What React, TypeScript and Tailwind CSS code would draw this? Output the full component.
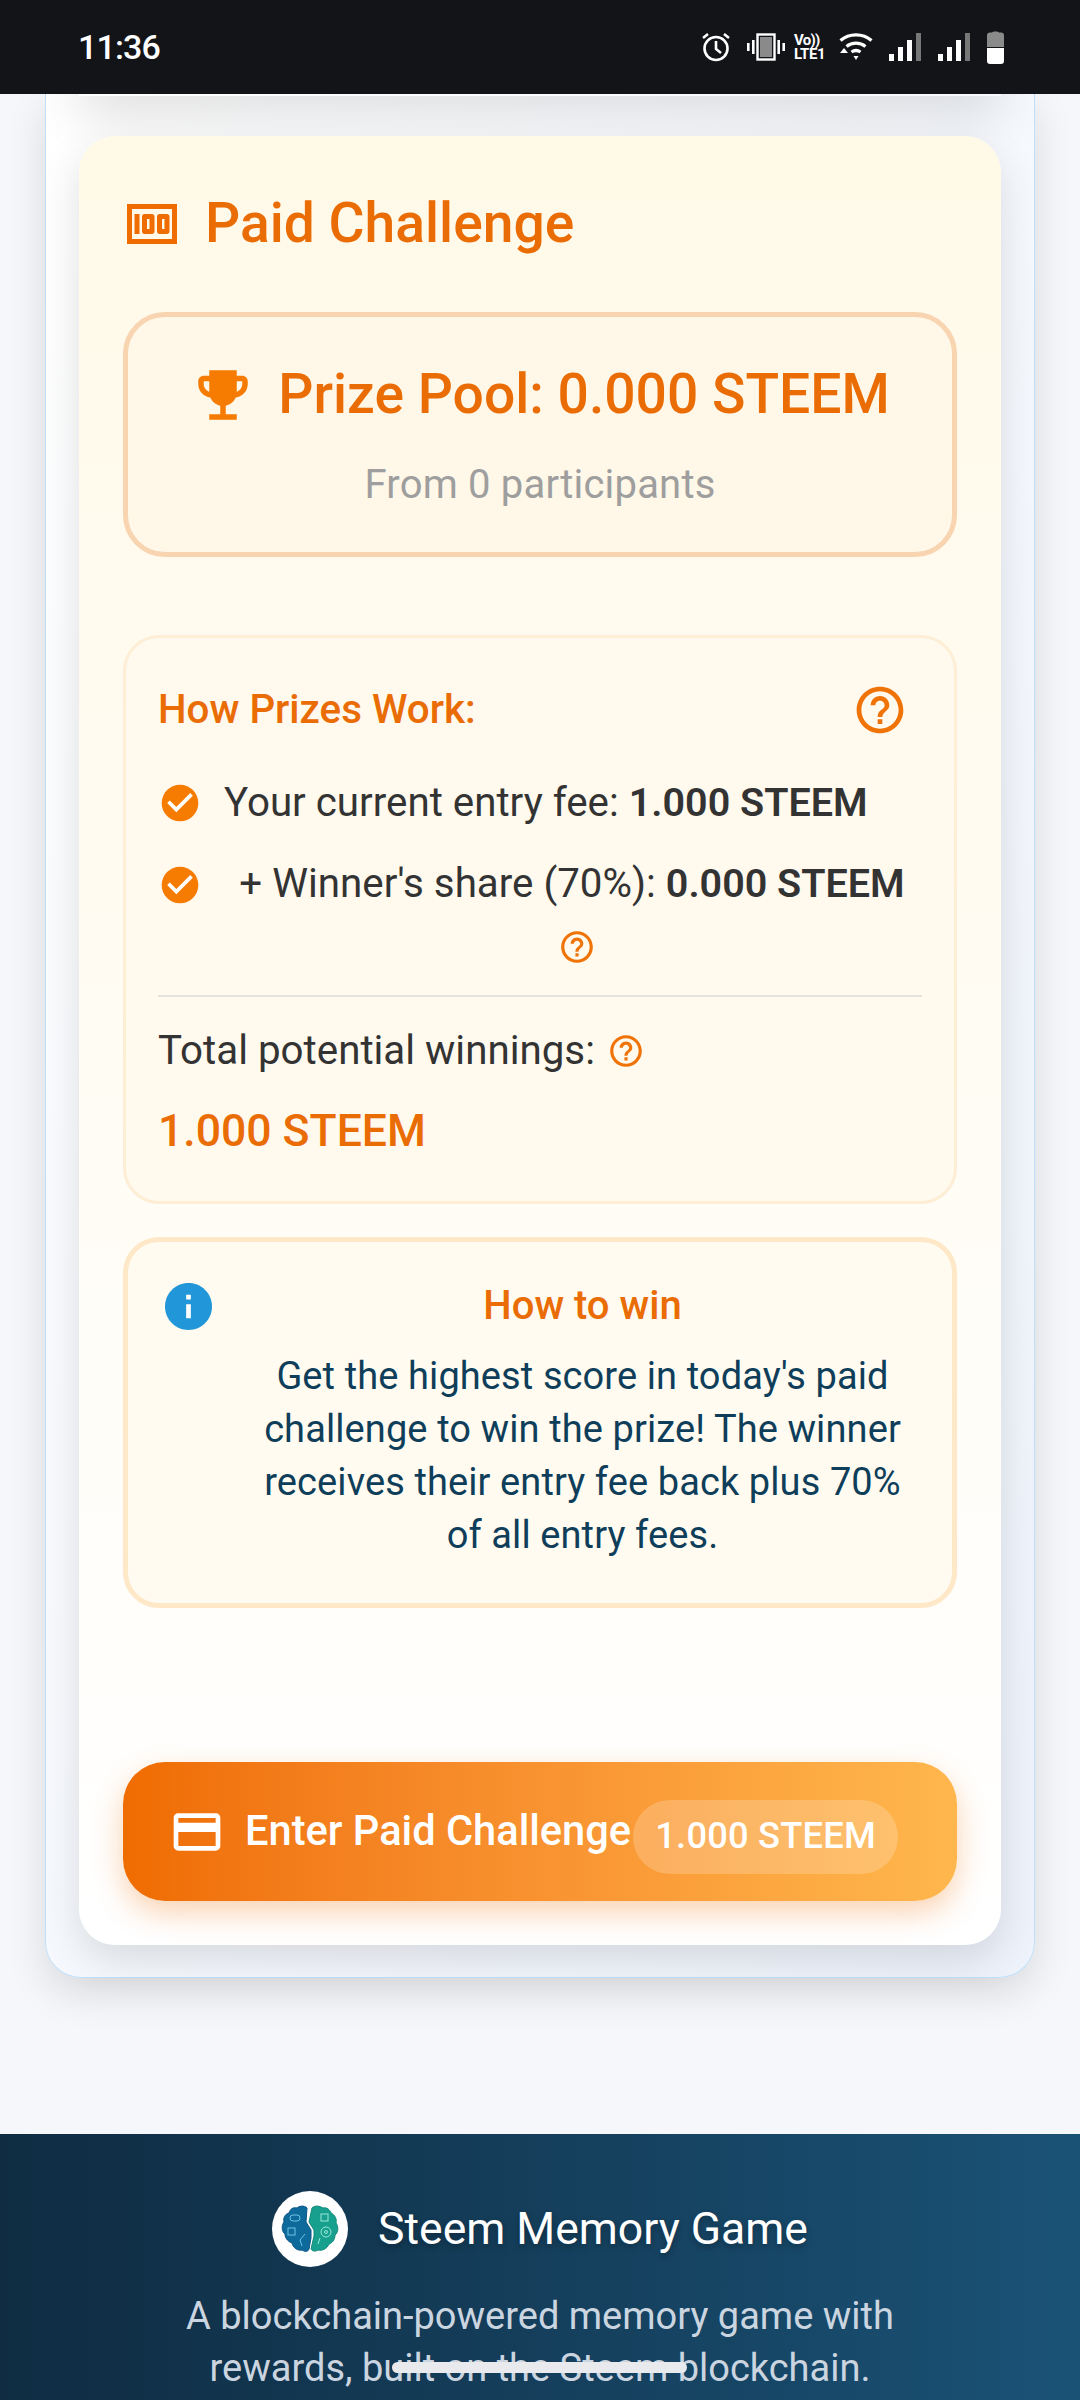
const Help = ({ className }: { className: string }) => (
  <svg viewBox="0 0 24 24" fill="currentColor" className={className}>
    <path d="M11 18h2v-2h-2zm1-16C6.48 2 2 6.48 2 12s4.48 10 10 10 10-4.48 10-10S17.52 2 12 2m0 18c-4.41 0-8-3.59-8-8s3.59-8 8-8 8 3.59 8 8-3.59 8-8 8m0-14c-2.21 0-4 1.79-4 4h2c0-1.1.9-2 2-2s2 .9 2 2c0 2-3 1.75-3 5h2c0-2.25 3-2.5 3-5 0-2.21-1.79-4-4-4" />
  </svg>
);

const Check = () => (
  <svg viewBox="0 0 24 24" fill="currentColor" className="w-[44px] h-[44px] shrink-0 text-[#f57c00]">
    <path d="M12 2C6.48 2 2 6.48 2 12s4.48 10 10 10 10-4.48 10-10S17.52 2 12 2" />
    <path fill="#fff" d="m10 17-5-5 1.41-1.41L10 14.17l7.59-7.59L19 8z" />
  </svg>
);

const Signal = () => (
  <svg viewBox="0 0 32 28" className="w-[32px] h-[28px]">
    <rect x="0" y="21" width="5" height="7" fill="#fff" />
    <rect x="9" y="14" width="5" height="14" fill="#fff" />
    <rect x="18" y="7" width="5" height="21" fill="#fff" />
    <rect x="27" y="0" width="5" height="28" fill="#777" />
  </svg>
);

const StatusBar = () => (
  <div className="h-[94px] bg-[#131418] flex items-center justify-between pl-[78px] pr-[76px] shrink-0 relative z-10">
    <span className="text-white text-[34px] font-medium tracking-tight">11:36</span>
    <div className="flex items-center">
      <svg viewBox="0 0 30 30" fill="none" stroke="#fff" strokeWidth="2.6" className="w-[30px] h-[30px]">
        <circle cx="15" cy="16.5" r="11.5" />
        <path d="M15 9v8l5 4M2 6l5-4M28 6l-5-4" />
      </svg>
      <svg viewBox="0 0 38 28" className="w-[38px] h-[28px] ml-[16px]" fill="none">
        <rect x="10.5" y="1.5" width="17" height="25" stroke="#fff" strokeWidth="2.4" />
        <rect x="13" y="4" width="12" height="20" fill="#8a8a8a" />
        <rect x="5" y="7" width="2.6" height="14" fill="#fff" />
        <rect x="0" y="10" width="2.6" height="8" fill="#fff" />
        <rect x="30.4" y="7" width="2.6" height="14" fill="#fff" />
        <rect x="35.4" y="10" width="2.6" height="8" fill="#fff" />
      </svg>
      <div className="ml-[9px] flex flex-col items-start text-white font-bold leading-[14px] text-[15px] w-[36px]">
        <span className="tracking-tighter">Vo))</span>
        <span className="tracking-tight">LTE1</span>
      </div>
      <svg viewBox="0 0 34 30" fill="none" stroke="#fff" strokeWidth="3.2" className="w-[34px] h-[30px] ml-[9px]">
        <path d="M1.5 8.5C10 1 24 1 32.5 8.5" />
        <path d="M7.5 14.5C13 10 21 10 26.5 14.5" />
        <path d="M12.5 20c3-2 6-2 9 0" />
        <path d="M14.5 24h5l-2.500 4z" fill="#fff" stroke="none" />
        <path d="M1 21l4-5 4 5z" fill="#fff" stroke="none" />
      </svg>
      <div className="ml-[16px]"><Signal /></div>
      <div className="ml-[17px]"><Signal /></div>
      <svg viewBox="0 0 17 34" className="w-[17px] h-[34px] ml-[17px]">
        <path d="M5 2.500C5 1 12 1 12 2.500H14c2 0 3 1 3 3V17H0V5.500c0-2 1-3 3-3z" fill="#8a8a8a" />
        <path d="M0 18h17v13c0 2-1 3-3 3H3c-2 0-3-1-3-3z" fill="#fff" />
      </svg>
    </div>
  </div>
);

const BrainLogo = () => (
  <div className="w-[76px] h-[76px] rounded-full bg-white flex items-center justify-center shrink-0">
    <svg viewBox="-1 -1 58 48" className="w-[58px] h-[48px]">
      <path d="M25 2C22-1 17 0 15 2 11 1 8 3 7 7 3 8 1 12 2 16-1 20 0 26 3 28 3 33 7 36 10 37 11 42 16 45 20 44 23 46 26 46 27 43L29 32V24L24 16z" fill="#0f6a9c" stroke="#0c5585" />
      <path d="M30 2C33-1 38 0 41 2 45 1 48 4 49 7 53 9 55 13 54 17 57 21 56 27 53 29 53 34 50 37 47 38 45 43 40 45 36 44 33 46 30 45 29 43L32 30V24L27 16z" fill="#17a08e" stroke="#12897b" />
      <g fill="none" stroke="#6cc3e3" strokeWidth="1">
        <rect x="8" y="9" width="10" height="6" rx="3" />
        <rect x="6" y="22" width="7" height="7" />
        <path d="M20 40l-2-6 5-6" />
      </g>
      <g fill="none" stroke="#9be8da" strokeWidth="1">
        <rect x="39" y="8" width="7" height="7" />
        <circle cx="44" cy="26" r="5" />
        <circle cx="44" cy="26" r="1.500" />
        <path d="M36 38l2-6" />
      </g>
    </svg>
  </div>
);

const App = () => {
  return (
    <div className="w-[1080px] h-[2400px] overflow-hidden relative bg-[#f5f7fb] flex flex-col font-['Roboto',sans-serif]">
      <StatusBar />

      <div className="px-[45px] shrink-0">
        {/* Outer card, top edge scrolled under the status bar */}
        <div className="relative h-[1884px] border-x border-b border-[#bfdffa] rounded-b-[36px] bg-gradient-to-br from-white to-[#edf2fb] shadow-[0_15px_40px_rgba(0,0,0,0.12)] px-[33px] pt-[42px]">
          {/* previous card's shadow, the card itself is under the status bar */}
          <div className="absolute left-[33px] right-[33px] top-[-60px] h-[62px] shadow-[0_20px_50px_rgba(0,0,0,0.12)]" />
          <div className="relative h-[1809px] rounded-[36px] bg-gradient-to-b from-[#fff9e8] to-white shadow-[0_15px_40px_rgba(0,0,0,0.12)] px-[44px] pt-[52px] flex flex-col">
            <div className="flex items-center h-[72px]">
              <svg viewBox="0 0 24 24" fill="#ef6c00" className="w-[60px] h-[60px] ml-[-1px]">
                <path d="M5 8h2v8H5zm7 0H9c-.55 0-1 .45-1 1v6c0 .55.45 1 1 1h3c.55 0 1-.45 1-1V9c0-.55-.45-1-1-1m-1 6h-1v-4h1zm7-6h-3c-.55 0-1 .45-1 1v6c0 .55.45 1 1 1h3c.55 0 1-.45 1-1V9c0-.55-.45-1-1-1m-1 6h-1v-4h1z" />
                <path d="M2 4v16h20V4zm2 14V6h16v12z" />
              </svg>
              <h2 className="ml-[23px] text-[#ea6c05] text-[55.2px] font-medium leading-none">Paid Challenge</h2>
            </div>

            {/* Prize pool */}
            <div className="mt-[52px] h-[245px] rounded-[42px] border-[5px] border-[#f8d5b0] bg-[#fff7e8] flex flex-col items-center pt-[42px]">
              <div className="flex items-center h-[72px]">
                <svg viewBox="0 0 24 24" fill="#f57c00" className="w-[66px] h-[66px]">
                  <path d="M19 5h-2V3H7v2H5c-1.100 0-2 .9-2 2v1c0 2.550 1.920 4.630 4.390 4.940.63 1.500 1.980 2.630 3.610 2.960V19H7v2h10v-2h-4v-3.100c1.630-.33 2.980-1.460 3.610-2.960C19.080 12.630 21 10.550 21 8V7c0-1.100-.9-2-2-2M5 8V7h2v3.820C5.840 10.400 5 9.300 5 8m14 0c0 1.300-.84 2.400-2 2.820V7h2z" />
                </svg>
                <span className="ml-[22px] text-[#ea6c05] text-[55.2px] font-medium leading-none">Prize Pool: 0.000 STEEM</span>
              </div>
              <p className="mt-[31px] text-[#9e9e9e] text-[40px] leading-[46px] tracking-[0.2px]">From 0 participants</p>
            </div>

            {/* How prizes work */}
            <div className="mt-[78px] h-[569px] rounded-[36px] border-[3px] border-[#fdeed5] bg-[#fff9ee] px-[32px] pt-[44px]">
              <div className="flex items-center justify-between h-[56px]">
                <h3 className="text-[#ea6c05] text-[40.300px] font-medium">How Prizes Work:</h3>
                <Help className="w-[56px] h-[56px] text-[#ef7306] mr-[14px]" />
              </div>
              <div className="mt-[42px] flex items-center h-[46px]">
                <Check />
                <span className="ml-[22px] text-[#333] text-[40.300px]">Your current entry fee: <b className="font-semibold text-[39.500px]">1.000 STEEM</b></span>
              </div>
              <div className="mt-[35px] flex items-start">
                <div className="pt-[2px]"><Check /></div>
                <div className="flex-1 text-center pl-[20px]">
                  <p className="text-[#333] text-[40.300px] leading-[46px] whitespace-nowrap">+ Winner's share (70%): <b className="font-semibold text-[39.500px]">0.000 STEEM</b></p>
                  <Help className="w-[38px] h-[38px] text-[#ef7306] inline-block mt-[21px] ml-[10px]" />
                </div>
              </div>
              <div className="mt-[29px] h-[2px] bg-[#e5e2da]" />
              <div className="mt-[31px] flex items-center h-[46px]">
                <span className="text-[#333] text-[40.300px]">Total potential winnings:</span>
                <Help className="w-[38px] h-[38px] text-[#ef7306] ml-[12px]" />
              </div>
              <p className="mt-[29px] text-[#ea6c05] text-[44.500px] font-medium leading-[56px]">1.000 STEEM</p>
            </div>

            {/* How to win */}
            <div className="mt-[33px] h-[371px] rounded-[36px] border-[5px] border-[#fee8c8] bg-[#fffbf0] flex pl-[37px] pt-[39px]">
              <svg viewBox="2 2 20 20" className="w-[47px] h-[47px] shrink-0 mt-[2px]">
                <path fill="#2196d8" d="M12 2C6.480 2 2 6.480 2 12s4.480 10 10 10 10-4.480 10-10S17.520 2 12 2" />
                <path fill="#fff" d="M13 17h-2v-6h2zm0-8h-2V7h2z" />
              </svg>
              <div className="flex-1 text-center pl-[40px] pr-[39px]">
                <h4 className="text-[#ea6c05] text-[40px] font-medium leading-[50px]">How to win</h4>
                <p className="mt-[19px] text-[#0f3e5a] text-[38px] leading-[53px] tracking-[0.1px]">Get the highest score in today's paid challenge to win the prize! The winner receives their entry fee back plus 70% of all entry fees.</p>
              </div>
            </div>

            {/* Enter button */}
            <button className="mt-[154px] h-[139px] shrink-0 rounded-[42px] bg-gradient-to-r from-[#ef6c00] to-[#ffb74d] shadow-[0_12px_30px_rgba(239,108,0,0.3)] flex items-center pl-[46px] text-white">
              <svg viewBox="0 0 24 24" fill="currentColor" className="w-[56px] h-[56px] shrink-0">
                <path d="M20 4H4c-1.110 0-1.990.89-1.990 2L2 18c0 1.110.89 2 2 2h16c1.110 0 2-.89 2-2V6c0-1.110-.89-2-2-2m0 14H4v-6h16zm0-10H4V6h16z" />
              </svg>
              <span className="ml-[20px] text-[41.600px] font-medium whitespace-nowrap">Enter Paid Challenge</span>
              <span className="ml-[2px] w-[265px] h-[74px] rounded-full bg-white/20 flex items-center justify-center text-[36.300px] font-medium mt-[10px] tracking-[0.2px]">1.000 STEEM</span>
            </button>
          </div>
        </div>
      </div>

      {/* Footer */}
      <div className="mt-[156px] flex-1 bg-gradient-to-r from-[#0f2c42] to-[#1a5276] flex flex-col items-center pt-[57px]">
        <div className="flex items-center">
          <BrainLogo />
          <span className="ml-[30px] text-white text-[44.500px] leading-none [text-shadow:0_3px_6px_rgba(0,0,0,0.3)]">Steem Memory Game</span>
        </div>
        <p className="mt-[23px] w-[800px] text-center text-[#cbd5e0] text-[38px] leading-[52px]">A blockchain-powered memory game with rewards, built on the Steem blockchain.</p>
      </div>

      {/* Gesture bar */}
      <div className="absolute left-[392px] top-[2362px] w-[295px] h-[11px] rounded-full bg-[#e8eaed]" />
    </div>
  );
};

export default App;
